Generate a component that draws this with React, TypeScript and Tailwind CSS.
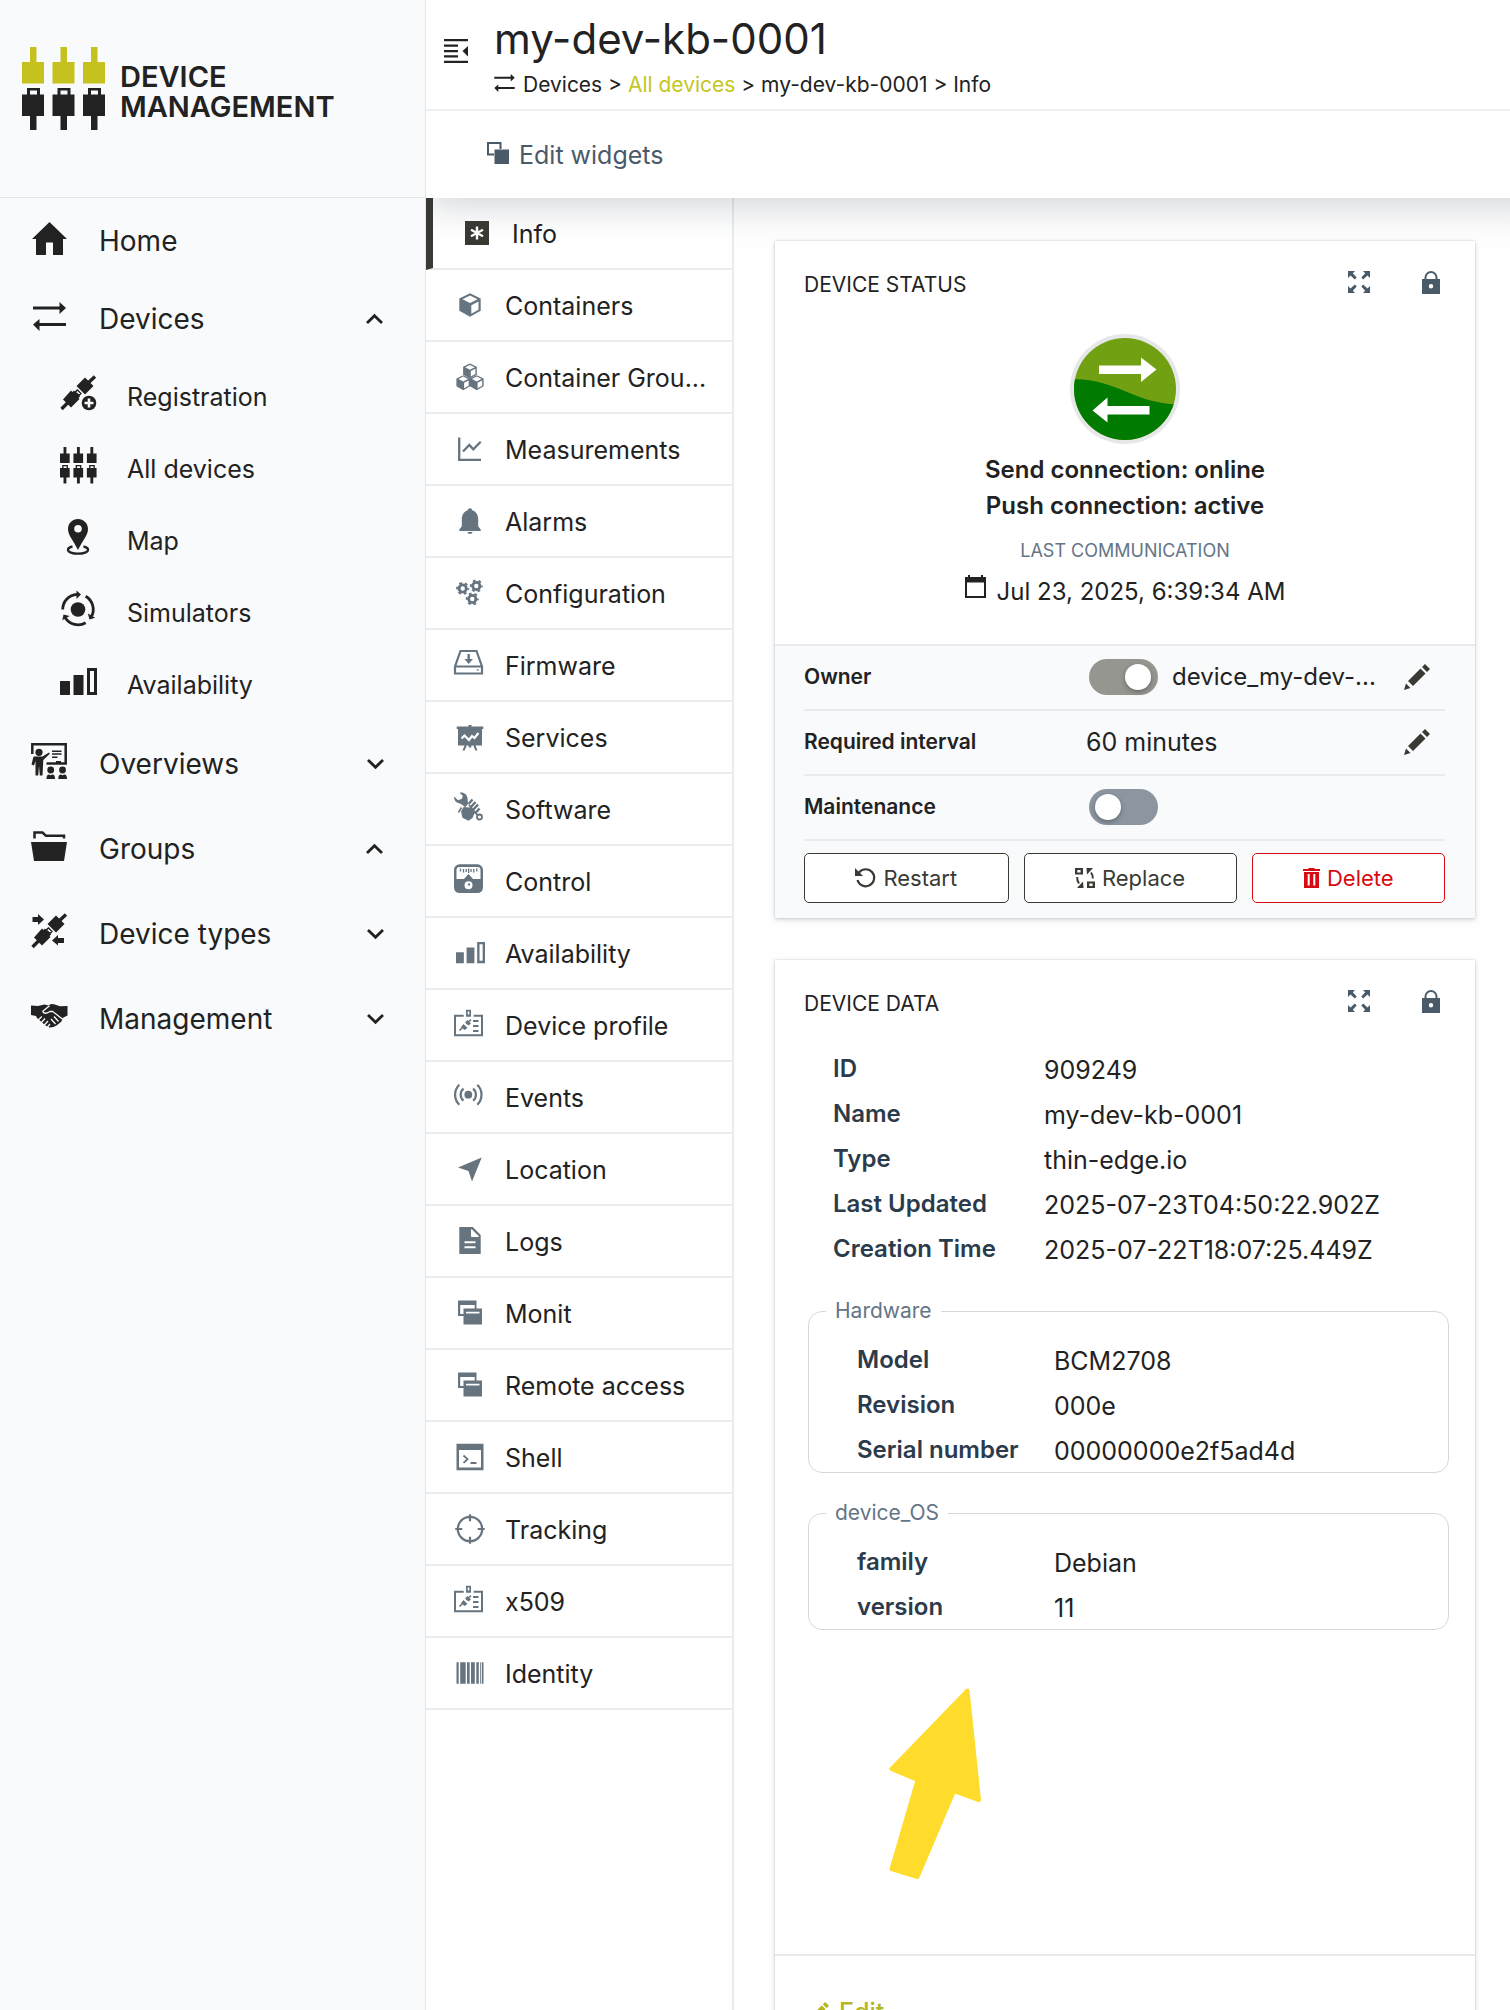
import type { ReactNode } from "react";

type IconProps = { children: ReactNode; w: number; h: number; className?: string };

function Svg({ children, w, h, className = "" }: IconProps) {
  return (
    <svg
      width={w}
      height={h}
      viewBox={`0 0 ${w} ${h}`}
      fill="currentColor"
      aria-hidden="true"
      className={`shrink-0 overflow-visible ${className}`}
    >
      {children}
    </svg>
  );
}

/* ---------- shared drawings ---------- */

function Plug({ x, top }: { x: number; top?: string }) {
  return (
    <g transform={`translate(${x} 0)`}>
      <path fill={top} d="M8 0h6.5v15H22v21.5H0V15h8z" />
      <path d="M0 47.5h5V41h13v6.5h4V69h-7.5v14H8V69H0zM8 43.5v4h7v-4z" fillRule="evenodd" />
    </g>
  );
}

function Plugs({ w, top }: { w: number; top?: string }) {
  return (
    <svg width={w} height={w} viewBox="0 0 84 84" fill="currentColor" aria-hidden="true" className="shrink-0">
      <Plug x={0} top={top} />
      <Plug x={30.5} top={top} />
      <Plug x={61} top={top} />
    </svg>
  );
}

function DiagonalPlug() {
  return (
    <>
      <path d="M25 2.5 33.5 11 25 19.5 16.5 11z" />
      <path d="M27 9 35 1.5" stroke="currentColor" strokeWidth="3.4" />
      <path d="m11 15.5 1.5 1.5 1.5-1.5 1 1 2-2 4 4-2 2 1 1-1.5 1.5 1 1L11 32.5 3 24.5z" />
      <path d="m15.5 17 2-2 3.5 3.5-2 2z" fill="#f9fafc" stroke="currentColor" strokeWidth="1.3" />
      <path d="M9 26.5 1.5 34" stroke="currentColor" strokeWidth="3.4" />
    </>
  );
}

const HomeIcon = () => (
  <Svg w={35} h={33}>
    <path d="M17.5 0 35 17h-4v16H21V20.5h-7V33H4V17H0z" />
  </Svg>
);

const SwapIcon = ({ small = false }: { small?: boolean }) => (
  <svg
    width={small ? 21 : 33}
    height={small ? 18 : 29}
    viewBox="0 0 33 29"
    fill="currentColor"
    aria-hidden="true"
    className="shrink-0"
  >
    <path d="M0 4.500h26.500V0L33 6l-6.500 6V7.500H0zM33 24H6.500v5L0 22.500 6.500 17v4H33z" />
  </svg>
);

const RegistrationIcon = () => (
  <Svg w={36} h={36}>
    <DiagonalPlug />
    <circle cx="29" cy="28" r="8.500" fill="#f9fafc" />
    <circle cx="29" cy="28" r="7.300" />
    <path d="M29 23.500v9M24.500 28h9" stroke="#f9fafc" strokeWidth="2.600" />
  </Svg>
);

const DeviceTypesIcon = () => (
  <Svg w={36} h={36}>
    <DiagonalPlug />
    <path d="M1.500 4H7V1l6 5.500L7 12V9H1.500zM33 25h-6v-3l-6 5.500 6 5V30h6z" />
  </Svg>
);

const PinIcon = () => (
  <Svg w={24} h={36}>
    <path
      fillRule="evenodd"
      d="M12 0c5.700 0 10 4.400 10 10 0 6-5 11-10 21C7 21 2 16 2 10 2 4.400 6.300 0 12 0zm0 6a3.800 3.800 0 1 0 0 7.600A3.800 3.800 0 0 0 12 6z"
    />
    <path
      d="M6.500 27.500C4 28 2 29 2 30.700c0 2.300 4.500 4 10 4s10-1.700 10-4c0-1.700-2-2.700-4.500-3.200"
      fill="none"
      stroke="currentColor"
      strokeWidth="2.300"
    />
  </Svg>
);

const SimulatorArm = ({ turn }: { turn: number }) => (
  <g transform={`rotate(${turn} 17 18.500)`}>
    <path d="M1.700 18.500A15.300 15.300 0 0 1 16 3.300" fill="none" stroke="currentColor" strokeWidth="2.800" />
    <path d="M15.500-.5 20 3.500l-4.500 4.500z" />
  </g>
);

const SimulatorIcon = () => (
  <Svg w={34} h={36}>
    <circle cx="17" cy="18.500" r="7.300" />
    <SimulatorArm turn={0} />
    <SimulatorArm turn={120} />
    <SimulatorArm turn={240} />
  </Svg>
);

const BarsIcon = ({ w = 37 }: { w?: number }) => (
  <svg width={w} height={(w * 27) / 37} viewBox="0 0 37 27" fill="currentColor" aria-hidden="true" className="shrink-0">
    <path d="M0 13h10v14H0zM13.500 7h10v20h-10z" />
    <path fillRule="evenodd" d="M27 0h10v27H27zm3 3v21h4V3z" />
  </svg>
);

const OverviewIcon = () => (
  <Svg w={36} h={36}>
    <path d="M1.300 11V1.300h33.400V20.500H15.500" fill="none" stroke="currentColor" strokeWidth="2.500" />
    <path d="M25 18h5v2h-5zM21 7.500h9.500V9H21zM21 10.300h9.500v1.500H21zM21 13.500h5.500V15H21z" />
    <circle cx="8" cy="9.300" r="3.600" />
    <path d="M2.500 13.500h9l6.500-4 .8 1.200-6.500 6.300L11.500 32.500H8.800L8 23l-.8 9.500H4.500V18L3 22.500.5 21.500z" />
    <circle cx="19.700" cy="27" r="3.400" />
    <circle cx="31.500" cy="27" r="3.400" />
    <path d="M15.500 36c0-3.500 1-4.500 2.500-4.500l1.700.8 1.800-.8c1.500 0 2.500 1 2.500 4.500zM27.300 36c0-3.500 1-4.500 2.500-4.500l1.700.8 1.800-.8c1.500 0 2.700 1 2.700 4.500z" />
  </Svg>
);

const FolderIcon = () => (
  <Svg w={36} h={30}>
    <path d="M0 11h36l-3 19H3z" />
    <path d="M3.500 7.500V1.500h8L15 4.800h18v2.700" fill="none" stroke="currentColor" strokeWidth="2.500" />
  </Svg>
);

const HandshakeIcon = () => (
  <Svg w={37} h={24}>
    <path d="M0 1.500 7 2 13.500.5l4 1L20 0l3 .3 6 1.900 7.500-.2v9.500L31.500 14l-1 3.500-2.500 2-2.500 2-3 1.500-4 .5-4-2L6 14l-1-2-5-1z" />
    <g fill="none" stroke="#f9fafc" strokeWidth="1.300">
      <path d="m18.500 1.800-6.700 5.400c.4 2.800 3.200 2.600 7.200.3l2.500-.2 9.800 7.700" />
      <path d="m23 12.500 4.500 5M20 15l4.500 5M10.800 12.500l-4 4M14 14.500l-4 4.500M17 17l-4 4.500M19 20l-2.500 3" />
    </g>
  </Svg>
);

const Chevron = ({ up = false }: { up?: boolean }) => (
  <Svg w={18} h={12}>
    <path d={up ? "M1 10 8.500 2.800 16 10" : "M2 2 9.500 9.200 17 2"} fill="none" stroke="currentColor" strokeWidth="2.800" />
  </Svg>
);

/* ---------- tab icons, drawn in a 28px box ---------- */

const Cube = ({ t }: { t?: string }) => (
  <g transform={t}>
    <path d="m14 2.300 10.700 5.200v12.300L14 25.700 3.300 19.800V7.500z" />
    <path d="m14 4.500 7.500 3.700L14 12 6.500 8.200zM15.300 14.200l7.200-3.700v8.200l-7.200 4z" fill="#fff" />
  </g>
);

const Gear = ({ x, y }: { x: number; y: number }) => (
  <g transform={`translate(${x} ${y})`} fill="none" stroke="currentColor">
    <circle r="3.600" strokeWidth="2.800" />
    <circle r="5.500" strokeWidth="2" strokeDasharray="2.700 3.060" strokeDashoffset="1.300" />
  </g>
);

const icons: Record<string, ReactNode> = {
  info: (
    <>
      <path d="M2 2h24v24H2z" />
      <path d="M14 7.500v13M8 10.800l12 6.400M20 10.800 8 17.200" stroke="#fff" strokeWidth="2.400" />
    </>
  ),
  cube: <Cube />,
  cubes: (
    <>
      <Cube t="translate(5 -1) scale(.64)" />
      <Cube t="translate(-1.700 10.700) scale(.64)" />
      <Cube t="translate(11.800 10.700) scale(.64)" />
    </>
  ),
  chart: (
    <g fill="none" stroke="currentColor" strokeWidth="2.300">
      <path d="M3.200 2.500v22.300H25" />
      <path d="m7 16.500 6.300-6.500 4 4.300 7.400-7.500" />
    </g>
  ),
  bell: (
    <path d="M14 1.300c-1.300 0-2.200.9-2.200 2C8 4.400 5.800 8 5.800 12.200v7L3.300 22.500V24h21.400v-1.500l-2.500-3.300v-7c0-4.200-2.200-7.800-6-8.900 0-1.100-.9-2-2.200-2zM11.300 25h5.400c-.5 1.300-1.400 2-2.700 2s-2.200-.7-2.700-2z" />
  ),
  gears: (
    <>
      <Gear x={6.7} y={9.5} />
      <Gear x={20.3} y={7} />
      <Gear x={16.3} y={20} />
    </>
  ),
  firmware: (
    <>
      <path d="M4.500 0h16L26 15.500v7H-1v-7zM-1 15.500h27" fill="none" stroke="currentColor" strokeWidth="2.200" />
      <path d="M11.500 3h2.400v5H17l-4.300 5-4.300-5h3.100zM20.500 18.500h2.500v1h-2.500z" />
    </>
  ),
  services: (
    <>
      <path d="M12.500 2h3v1.500H27.300v2.500H26v16.500h-6.500l2 5h-2.200l-2-5h-1.800l-.3 2h-2.400l-.3-2h-1.800l-2 5H6.500l2-5H2V6H.7V3.500h11.800z" />
      <path d="m5.500 15.500 3-3 4.500 4.500 3-4 2.500 2 4-5" fill="none" stroke="#fff" strokeWidth="2.200" />
    </>
  ),
  software: (
    <>
      <path d="M3.500-2.300C7-3.500 11-1 11.500 3l.5 6-3 3.500C7 9 3 8.500 1 7.500-1 6.500-2.200 4-1.800 1.500L2 5.200 6 3.800l.8-3z" />
      <path d="M5 16.500 7.500 12l6.500.5 5 4.500-2.500 6-4 2.700-6-3z" />
      <path d="m2.500 17.500 3-5" stroke="currentColor" strokeWidth="1.500" />
      <path d="m12.500 9 4-4.500M14.500 12.500l5-5.500M17 15l5-5.500M19 18.500l4.500-5" stroke="currentColor" strokeWidth="2.400" />
      <path d="m13 10 10 12" stroke="currentColor" strokeWidth="1.800" />
      <circle cx="23.500" cy="22" r="2.500" fill="#fff" stroke="currentColor" strokeWidth="1.800" />
    </>
  ),
  control: (
    <>
      <rect x="-2" y="-2.700" width="29" height="28.700" rx="5.500" />
      <path d="M3.500 0h18c2 0 3 1.200 3 3v9h-24V3c0-1.800 1-3 3-3z" fill="#fff" />
      <path
        d="M4.500 1.500V4.500M7.500 2v3.500M10.200 2v3M12.600 1.500v4.500M15 2v3M17.800 2v3.500M20.800 1.500V4.500"
        stroke="currentColor"
        strokeWidth="1.300"
      />
      <path d="m12.500 7 5 5.500h-10z" />
      <circle cx="12.500" cy="18.300" r="4" fill="#fff" />
      <path d="M12 16.500h2V18.500h-2z" />
    </>
  ),
  bars: null,
  profile: (
    <>
      <path d="M7.700 4.800H-1v19.400h27V4.800h-8.300" fill="none" stroke="currentColor" strokeWidth="2" />
      <path fillRule="evenodd" d="M10-1.300h5v7h-5zM11.700.5v3h1.600v-3z" />
      <path d="m3.500 19.500 3-3M10.500 13l4.500-4.500" stroke="currentColor" strokeWidth="1.600" />
      <path d="m7.500 13 4 4-3 2-3.500-3zM11.500 9l3.500 3.500-2.500 2L9 11.500z" />
      <path d="M17 9h5.500v2H17zM17 14h5.500v2H17zM17 19h5.500v2H17z" />
    </>
  ),
  events: (
    <>
      <circle cx="12.300" cy="11.700" r="3.900" />
      <g fill="none" stroke="currentColor" strokeWidth="2.200">
        <path d="M7.500 5.700a7.800 7.800 0 0 0 0 12M17.100 5.700a7.800 7.800 0 0 1 0 12" />
        <path d="M3.300 1.700a14 14 0 0 0 0 20M21.300 1.700a14 14 0 0 1 0 20" />
      </g>
    </>
  ),
  location: <path d="M25.700 2.500 16 26.500l-3.500-10.500L2 12.500z" />,
  logs: (
    <>
      <path fillRule="evenodd" d="M3.300 0h13.500l7.900 8v19H3.300zM15.500 2v7.500h7.700z" />
      <path d="M15.500 2.500v7h7" fill="none" stroke="#fff" strokeWidth="1" />
      <path d="M8.500 14.200h11v2h-11zM8.500 19.300h11v2h-11z" fill="#fff" />
    </>
  ),
  windows: (
    <>
      <path fillRule="evenodd" d="M2 1.600h18.500V10h-1.800V6H4.200v9H8v2H2z" />
      <path fillRule="evenodd" d="M7.500 9.500H26v16H7.500zm2.500 3.300v1.800h13.500v-1.800z" />
    </>
  ),
  shell: (
    <>
      <path fillRule="evenodd" d="M.5.700h27v26.500H.5zM3 7v17.500h22V7z" />
      <path d="m7.500 12.500 4 3.700-4 3.700M14.500 20h6" fill="none" stroke="currentColor" strokeWidth="1.800" />
    </>
  ),
  tracking: (
    <g fill="none" stroke="currentColor" strokeWidth="2.200">
      <circle cx="14" cy="14" r="12.200" />
      <path d="M14-.7v7M14 21.700v7M-.7 14h7M21.700 14h7" />
    </g>
  ),
  barcode: (
    <path d="M.5 3.300h2.200v21.400H.5zM4.200 3.300h5.500v21.400H4.200zM11 3.300h2.700v21.400H11zM15 3.300h3.800v21.400H15zM20.300 3.300h2.500v21.400h-2.500zM24.200 3.300h1v21.400h-1zM26 3.300h1.500v21.400H26z" />
  ),
};

const tabs: [string, string][] = [
  ["info", "Info"],
  ["cube", "Containers"],
  ["cubes", "Container Grou..."],
  ["chart", "Measurements"],
  ["bell", "Alarms"],
  ["gears", "Configuration"],
  ["firmware", "Firmware"],
  ["services", "Services"],
  ["software", "Software"],
  ["control", "Control"],
  ["bars", "Availability"],
  ["profile", "Device profile"],
  ["events", "Events"],
  ["location", "Location"],
  ["logs", "Logs"],
  ["windows", "Monit"],
  ["windows", "Remote access"],
  ["shell", "Shell"],
  ["tracking", "Tracking"],
  ["profile", "x509"],
  ["barcode", "Identity"],
];

function Tab({ icon, label, active }: { icon: string; label: string; active: boolean }) {
  return (
    <li>
      <a
        href="#"
        aria-current={active ? "page" : undefined}
        className={`flex h-[72px] items-center gap-[15px] border-b-2 border-[#e9ebed] pl-6 ${
          active ? "border-l-[7px] border-l-[#3a3a34]" : ""
        }`}
      >
        <span className={`flex w-10 shrink-0 justify-center ${active ? "text-[#3a3a34]" : "text-[#66747f]"}`}>
          {icon === "bars" ? (
            <BarsIcon w={29} />
          ) : (
            <Svg w={28} h={28}>
              {icons[icon]}
            </Svg>
          )}
        </span>
        <span className="whitespace-nowrap pt-[2px]">{label}</span>
      </a>
    </li>
  );
}

/* ---------- left navigator ---------- */

function NavItem({ icon, label, open, tall }: { icon: ReactNode; label: string; open?: boolean; tall?: boolean }) {
  const body = (
    <>
      <span className="mb-1.5 flex w-10 shrink-0 justify-center">{icon}</span>
      <span className="ml-[30px] grow text-left">{label}</span>
      {open !== undefined && <Chevron up={open} />}
    </>
  );
  const cls = `flex w-full items-center pl-[29px] pr-[41px] text-[28px] ${tall ? "h-[85px]" : "h-[78px]"}`;
  return open === undefined ? (
    <a href="#" className={cls}>
      {body}
    </a>
  ) : (
    <button type="button" aria-expanded={open} className={cls}>
      {body}
    </button>
  );
}

function SubItem({ icon, label }: { icon: ReactNode; label: string }) {
  return (
    <a href="#" className="flex h-[72px] items-center pl-[58px]">
      <span className="mb-2 flex w-10 shrink-0 justify-center">{icon}</span>
      <span className="ml-[29px]">{label}</span>
    </a>
  );
}

function Navigator() {
  return (
    <aside className="w-[426px] shrink-0 border-r border-[#e3e6e9] bg-[#f9fafc]">
      <div className="flex h-[198px] items-start gap-[14px] border-b border-[#e3e6e9] pl-[22px] pt-[47px]">
        <Plugs w={84} top="#c5c11f" />
        <div className="pt-[15px] text-[29px] font-semibold leading-[30px]">
          <div>DEVICE</div>
          <div>MANAGEMENT</div>
        </div>
      </div>
      <nav aria-label="Navigator" className="pt-1">
        <NavItem icon={<HomeIcon />} label="Home" />
        <NavItem icon={<SwapIcon />} label="Devices" open />
        <div className="pt-[3px]">
          <SubItem icon={<RegistrationIcon />} label="Registration" />
          <SubItem icon={<Plugs w={37} />} label="All devices" />
          <SubItem icon={<PinIcon />} label="Map" />
          <SubItem icon={<SimulatorIcon />} label="Simulators" />
          <SubItem icon={<BarsIcon />} label="Availability" />
        </div>
        <NavItem tall icon={<OverviewIcon />} label="Overviews" open={false} />
        <NavItem tall icon={<FolderIcon />} label="Groups" open />
        <NavItem tall icon={<DeviceTypesIcon />} label="Device types" open={false} />
        <NavItem tall icon={<HandshakeIcon />} label="Management" open={false} />
      </nav>
    </aside>
  );
}

/* ---------- header ---------- */

function Header() {
  return (
    <header className="relative z-10 -mr-10 bg-white pr-10 shadow-[0_8px_36px_rgba(30,45,70,0.2)]">
      <div className="flex h-[111px] border-b-2 border-[#eff0f1] pl-[18px]">
        <button type="button" aria-label="Toggle navigation" className="mt-[39px] h-6 w-6">
          <Svg w={24} h={24}>
            <path d="M0 0h24v2.200H0zM0 5.500h14v2.200H0zM0 11h14v2.200H0zM0 16.300h14v2.200H0zM0 21.800h24V24H0zM24 7v10.500L18.500 12z" />
          </Svg>
        </button>
        <div className="ml-[26px] pt-4">
          <h1 className="text-[42px] leading-[46px]">my-dev-kb-0001</h1>
          <nav aria-label="Breadcrumb" className="mt-[9px] flex items-center gap-2 text-[21px] leading-7">
            <span className="mb-1">
              <SwapIcon small />
            </span>
            <span>
              Devices &gt;{" "}
              <a href="#" className="text-[#c5c61f]">
                All devices
              </a>{" "}
              &gt; my-dev-kb-0001 &gt; Info
            </span>
          </nav>
        </div>
      </div>
      <div className="flex h-[87px] items-center pl-[61px]">
        <button type="button" className="flex items-center gap-[10px] text-[#4b5a69]">
          <Svg w={22} h={22} className="mb-1">
            <path fillRule="evenodd" d="M0 0h14.500v7H7v6.500H0zm2 2v9.500h5V7h5.500V2z" />
            <path d="M7.500 7.500H22V22H7.500z" />
          </Svg>
          Edit widgets
        </button>
      </div>
    </header>
  );
}

/* ---------- cards ---------- */

function Card({ title, children }: { title: string; children: ReactNode }) {
  return (
    <section className="bg-white shadow-[0_0_2px_rgba(60,80,100,0.25),0_2px_5px_rgba(60,80,100,0.2)]">
      <div className="flex h-[86px] items-center pl-[29px] pr-[35px]">
        <h2 className="grow pt-[2px] text-[21px]">{title}</h2>
        <button type="button" aria-label="Expand" className="mb-1 text-[#4b5a69]">
          <Svg w={22} h={22}>
            <path
              d="M0 0h7L4.800 2.300l3.900 4.200-1.900 1.900L2.500 4.600 0 7zM22 0v7l-2.500-2.400-4.300 3.800-1.900-1.900 3.900-4.200L15 0zM0 22v-7l2.500 2.400 4.300-3.800 1.900 1.900-3.900 4.200L7 22zM22 22h-7l2.200-2.300-3.900-4.200 1.900-1.900 4.300 3.800L22 15z"
            />
          </Svg>
        </button>
        <button type="button" aria-label="Locked" className="mb-1 ml-[52px] text-[#4b5a69]">
          <Svg w={18} h={23}>
            <path
              fillRule="evenodd"
              d="M0 8h2.500V6.500a6.500 6.500 0 0 1 13 0V8H18v15H0zm4.500 0h9V6.500a4.500 4.500 0 0 0-9 0zM9 13a2.200 2.200 0 1 0 0 4.400A2.200 2.200 0 0 0 9 13z"
            />
          </Svg>
        </button>
      </div>
      {children}
    </section>
  );
}

const Pencil = ({ small = false }: { small?: boolean }) => (
  <svg
    width={small ? 20 : 26}
    height={small ? 20 : 26}
    viewBox="0 0 26 26"
    fill="currentColor"
    aria-hidden="true"
    className="shrink-0"
  >
    <path d="m21 0 5 5-3 3-5-5zM16.500 4.500l5 5L9 22l-5-5zM2 19.500 6.500 24 0 26z" />
  </svg>
);

const switchClass =
  "relative h-9 w-[69px] shrink-0 appearance-none rounded-full bg-[#8b96a1] before:absolute before:left-[6px] before:top-[5px] before:h-[26px] before:w-[26px] before:rounded-full before:bg-white before:shadow-[0_2px_5px_rgba(0,0,0,0.3)] checked:bg-[#969690] checked:before:left-9";

const rowClass = "grid h-[65px] grid-cols-[44%_1fr_auto] items-center border-b-2 border-[#e9ebed] pb-[2px]";

const actionClass =
  "flex h-[50px] flex-auto items-center justify-center gap-[7px] rounded-[5px] border border-current bg-white";

function DeviceStatus() {
  return (
    <Card title="DEVICE STATUS">
      <div className="flex flex-col items-center pb-[34px] pt-[7px]">
        <svg width="110" height="110" viewBox="0 0 110 110" role="img" aria-label="Connection status">
          <clipPath id="status-disc">
            <circle cx="55" cy="55" r="51" />
          </clipPath>
          <circle cx="55" cy="55" r="55" fill="#e6e7e8" />
          <g clipPath="url(#status-disc)">
            <path d="M0 0h110v110H0z" fill="#72a013" />
            <path d="M0 45.500C45 43 62 70 110 70.500V110H0z" fill="#007a00" />
          </g>
          <path d="M29 31.500h42V23.500l15.500 12L71 48v-8H29zM79.500 72h-42v-8.500L22.500 76.500l15 12v-8h42z" fill="#fff" />
        </svg>
        <p className="mt-2 text-center text-[24px] font-semibold leading-9">
          Send connection: online
          <br />
          Push connection: active
        </p>
        <p className="mt-[13px] text-[18px] leading-7 text-[#647586]">LAST COMMUNICATION</p>
        <p className="mt-[9px] flex items-center gap-[11px] text-[24px] leading-9">
          <Svg w={21} h={23} className="mb-3">
            <path fillRule="evenodd" d="M0 2h3V0h2v2h11V0h2v2h3v21H0zm2 5.500V21h17V7.500z" />
          </Svg>
          Jul 23, 2025, 6:39:34 AM
        </p>
      </div>
      <div className="border-t-2 border-[#e8eaed] bg-[#f9fafc] pb-[15px] pl-[29px] pr-[30px]">
        <div className={rowClass}>
          <label htmlFor="owner" className="text-[21px] font-semibold">
            Owner
          </label>
          <div className="flex items-center gap-[14px] pl-[3px]">
            <input id="owner" type="checkbox" role="switch" defaultChecked className={switchClass} />
            <span className="text-[24px]">device_my-dev-...</span>
          </div>
          <button type="button" aria-label="Edit owner" className="mr-[15px] text-[#3a3a34]">
            <Pencil />
          </button>
        </div>
        <div className={rowClass}>
          <span className="text-[21px] font-semibold">Required interval</span>
          <span>60 minutes</span>
          <button type="button" aria-label="Edit required interval" className="mr-[15px] text-[#3a3a34]">
            <Pencil />
          </button>
        </div>
        <div className={rowClass}>
          <label htmlFor="maintenance" className="text-[21px] font-semibold">
            Maintenance
          </label>
          <div className="flex items-center pl-[3px]">
            <input id="maintenance" type="checkbox" role="switch" className={switchClass} />
          </div>
        </div>
        <div className="mt-[12px] flex gap-[15px] text-[22px] text-[#3a3a34]">
          <button type="button" className={actionClass}>
            <Svg w={21} h={20}>
              <path d="M4 4.500A8.500 8.500 0 1 1 2.500 12" fill="none" stroke="currentColor" strokeWidth="2.200" />
              <path d="M0 0v8h8z" />
            </Svg>
            Restart
          </button>
          <button type="button" className={actionClass}>
            <Svg w={20} h={20}>
              <path fillRule="evenodd" d="M0 0h8v6.500H0zm2.300 2v2.500h3.300V2zM12 13.500h8V20h-8zm2.300 2V18h3.300v-2.500z" />
              <path
                d="M16 4.500c1.500 2 2 4 1.800 6M4 15.500C2.500 13.500 2 11.500 2.200 9"
                fill="none"
                stroke="currentColor"
                strokeWidth="2"
              />
              <path d="M11.500 0h6.500l-6 6.500zM8.500 20H2l6-6.500z" />
            </Svg>
            Replace
          </button>
          <button type="button" className={`${actionClass} text-[#d70b12]`}>
            <Svg w={17} h={20}>
              <path d="M0 1h5.500V0h6v1H17v2H0z" />
              <path fillRule="evenodd" d="M1 4h15v16H1zm3.700 2v11.500h2V6zm5.600 0v11.500h2V6z" />
            </Svg>
            Delete
          </button>
        </div>
      </div>
    </Card>
  );
}

function Fields({ rows, nested = false }: { rows: [string, string][]; nested?: boolean }) {
  return (
    <dl className={nested ? "pl-12 pt-3" : "pl-[58px]"}>
      {rows.map(([k, v]) => (
        <div key={k} className="flex h-[45px] items-center">
          <dt
            className={`shrink-0 text-[24px] font-semibold text-[#2b3b4b] ${nested ? "w-[197px]" : "w-[211px]"}`}
          >
            {k}
          </dt>
          <dd className="pt-[3px]">{v}</dd>
        </div>
      ))}
    </dl>
  );
}

function Group({ title, rows }: { title: string; rows: [string, string][] }) {
  return (
    <fieldset className="ml-[33px] mr-[26px] mt-[26px] rounded-[14px] border border-[#d3d8dd]">
      <legend className="ml-[17px] px-[9px] text-[21px] leading-7 text-[#647586]">{title}</legend>
      <Fields nested rows={rows} />
    </fieldset>
  );
}

function DeviceData() {
  return (
    <Card title="DEVICE DATA">
      <Fields
        rows={[
          ["ID", "909249"],
          ["Name", "my-dev-kb-0001"],
          ["Type", "thin-edge.io"],
          ["Last Updated", "2025-07-23T04:50:22.902Z"],
          ["Creation Time", "2025-07-22T18:07:25.449Z"],
        ]}
      />
      <Group
        title="Hardware"
        rows={[
          ["Model", "BCM2708"],
          ["Revision", "000e"],
          ["Serial number", "00000000e2f5ad4d"],
        ]}
      />
      <Group
        title="device_OS"
        rows={[
          ["family", "Debian"],
          ["version", "11"],
        ]}
      />
      <div className="h-[326px] border-b-2 border-[#e8eaed] pl-[114px] pt-[58px]">
        <svg width="92" height="192" viewBox="0 0 92 192" aria-hidden="true">
          <path
            d="M78.500 2.500 2.500 81l26 11L2.500 181l26 8L65 103l25 9z"
            fill="#ffdc2b"
            stroke="#ffdc2b"
            strokeWidth="4"
            strokeLinejoin="round"
          />
        </svg>
      </div>
      <div className="flex h-28 items-center pl-[34px]">
        <button type="button" className="flex items-center gap-[10px] font-medium text-[#b5b81c]">
          <Pencil small />
          Edit
        </button>
      </div>
    </Card>
  );
}

export default function App() {
  return (
    <div className="flex h-screen overflow-hidden bg-[#fefefe] font-['Inter',sans-serif] text-[25px] leading-8 text-[#222]">
      <Navigator />
      <div className="flex min-w-0 grow flex-col overflow-hidden">
        <Header />
        <div className="flex min-h-0 grow">
          <ul className="w-[308px] shrink-0 border-r-2 border-[#e9ebed] bg-white">
            {tabs.map(([icon, label], i) => (
              <Tab key={label} icon={icon} label={label} active={i === 0} />
            ))}
          </ul>
          <main className="flex min-w-0 grow flex-col gap-[42px] overflow-hidden pl-[41px] pr-[35px] pt-[43px] [&>section]:shrink-0">
            <DeviceStatus />
            <DeviceData />
          </main>
        </div>
      </div>
    </div>
  );
}
